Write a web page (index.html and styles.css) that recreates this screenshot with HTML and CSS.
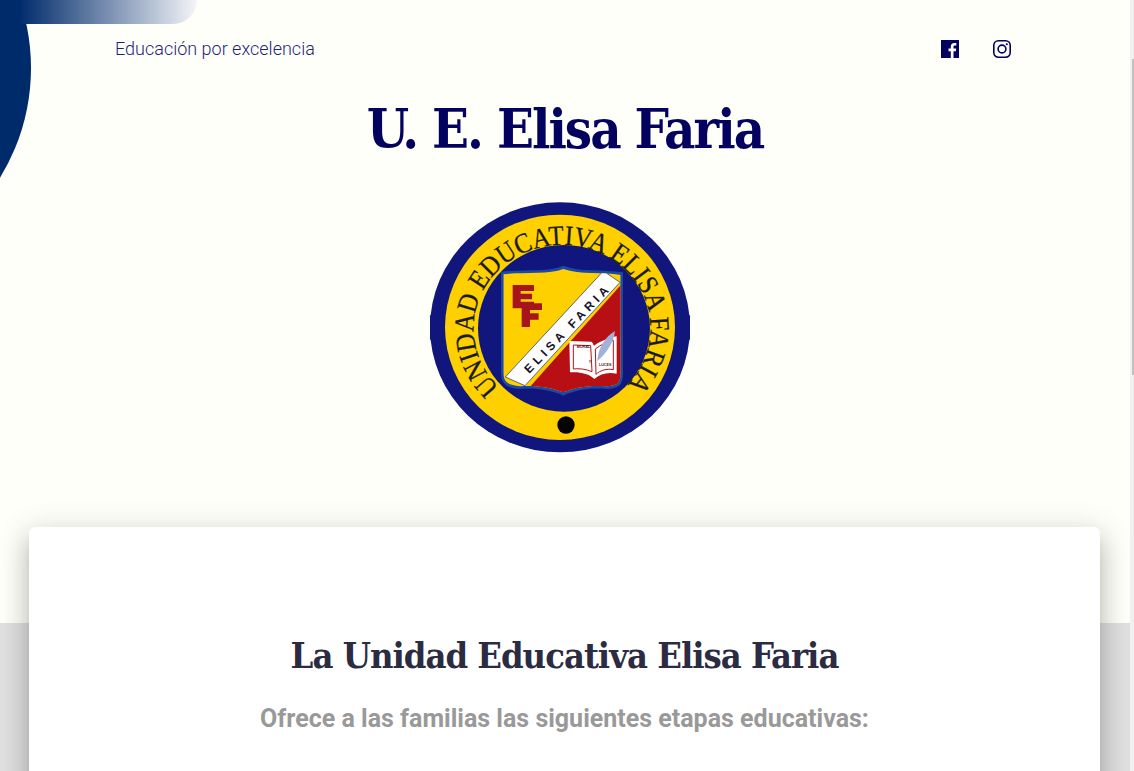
FILE: index.html
```html
<!DOCTYPE html>
<html lang="es">
<head>
<meta charset="utf-8">
<title>U. E. Elisa Faria</title>
<link rel="stylesheet" href="styles.css">
</head>
<body>
<div class="frame">
  <main class="page">
    <header class="hero">
      <div class="deco-circle"></div>
      <div class="deco-bar"></div>
      <div class="topbar">
        <span class="tagline">Educación por excelencia</span>
        <nav class="social">
          <a class="social-link" href="#" aria-label="Facebook">
            <svg class="icon" viewBox="0 0 18 18"><path class="icon-fill" d="M0 0H18V18H12.5V11.2H14.8L15.2 8.5H12.5V6.8C12.5 6 12.8 5.5 13.9 5.5H15.3V3.1C15 3.1 14.2 3 13.3 3C11.2 3 9.8 4.3 9.8 6.5V8.5H7.5V11.2H9.8V18H0Z"/></svg>
          </a>
          <a class="social-link" href="#" aria-label="Instagram">
            <svg class="icon" viewBox="0 0 18 18"><rect class="icon-line" x=".8" y=".8" width="16.4" height="16.4" rx="4.6"/><circle class="icon-line" cx="9" cy="9" r="3.9"/><circle class="icon-fill" cx="13.8" cy="4.2" r="1.05"/></svg>
          </a>
        </nav>
      </div>
      <h1 class="title">U. E. Elisa Faria</h1>
      <svg class="logo" viewBox="15 0 840 795" role="img" aria-label="Escudo Unidad Educativa Elisa Faria">
        <defs>
          <path id="ring-text" d="M239 577 A 265 250 0 1 1 615 575"/>
          <clipPath id="shield-clip"><path d="M250 238 C310 230 385 240 430 222 C480 240 550 230 602 240 L602 540 C600 566 590 572 560 574 C510 570 470 576 430 592 C390 576 340 570 300 574 C262 570 250 560 250 530Z"/></clipPath>
        </defs>
        <rect class="logo-navy" x="30" y="360" width="780" height="75" rx="4"/>
        <ellipse class="logo-navy" cx="420" cy="397" rx="390" ry="375"/>
        <ellipse class="logo-yellow" cx="420" cy="397" rx="345" ry="338"/>
        <ellipse class="logo-navy" cx="432" cy="400" rx="258" ry="250"/>
        <text class="ring-label"><textPath href="#ring-text" textLength="1195" lengthAdjust="spacingAndGlyphs">UNIDAD EDUCATIVA ELISA FARIA</textPath></text>
        <path class="shield-edge" d="M243 230 C310 222 385 232 430 212 C480 232 550 222 609 232 L609 540 C607 572 596 580 560 582 C510 578 470 584 430 602 C390 584 340 578 300 582 C256 578 243 566 243 530Z"/>
        <g clip-path="url(#shield-clip)">
          <rect class="logo-yellow" x="240" y="200" width="380" height="420"/>
          <path class="logo-red" d="M620 250 L620 620 L290 620Z"/>
          <path class="band" d="M550 228 L600 262 L315 572 L256 546Z"/>
        </g>
        <text class="band-label" transform="translate(328 537) rotate(-46)" textLength="345" lengthAdjust="spacing">ELISA FARIA</text>
        <path class="logo-mark" d="M278 270H342V288H302V296H336V313H302V320H342V340H278Z"/>
        <path class="logo-mark" d="M305 325H366V345H330V355H356V374H330V396H305Z"/>
        <path class="book" d="M448 438L514 440C518 442 520 448 522 452C540 440 565 428 590 424V536C565 530 540 536 523 552C508 536 480 530 450 532Z"/>
        <path class="book-line" d="M460 450L512 452L516 530C498 522 478 520 460 522ZM580 436V524C560 520 540 526 528 538L526 462C540 450 560 442 580 436Z"/>
        <path class="quill" d="M532 498C534 460 555 425 585 408C582 440 562 472 532 498Z"/>
        <text class="book-label" x="470" y="459">MORAL</text>
        <text class="book-label" x="506" y="503">Y</text>
        <text class="book-label" x="537" y="514">LUCES</text>
        <circle class="logo-dot" cx="438" cy="690" r="26"/>
      </svg>
    </header>
    <section class="band-section">
      <article class="card">
        <h2 class="card-title">La Unidad Educativa Elisa Faria</h2>
        <h3 class="card-subtitle">Ofrece a las familias las siguientes etapas educativas:</h3>
      </article>
    </section>
  </main>
  <aside class="scrollbar" aria-hidden="true"><div class="scrollbar-thumb"></div></aside>
</div>
</body>
</html>
```
FILE: styles.css
```css
* { box-sizing: border-box; }
html, body { margin: 0; height: 100%; overflow: hidden; }
body { font-family: Roboto, "Liberation Sans", sans-serif; background: #fffff9; }

.frame { display: flex; height: 771px; overflow: hidden; }
.page { flex: 1; min-width: 0; overflow: hidden; }
.scrollbar { width: 4px; background: #f1f1f1; padding-top: 59px; display: flex; justify-content: flex-end; }
.scrollbar-thumb { width: 2px; height: 316px; background: #c1c1c1; }

.hero { position: relative; height: 623px; background: #fffff9; overflow: hidden; }
.deco-circle { position: absolute; left: -389px; top: -142px; width: 420px; height: 420px; border-radius: 50%; background: #002b6b; }
.deco-bar { position: absolute; left: 0; top: 0; width: 197px; height: 24px; border-bottom-right-radius: 24px; background: linear-gradient(90deg, #002b6b 10%, #f4f5f8 100%); }

.topbar { position: relative; display: flex; justify-content: space-between; align-items: center; padding: 38px 119px 0 115px; height: 59px; }
.tagline { font-weight: 300; font-size: 18px; line-height: 21px; color: #1f1f78; }
.social { display: flex; gap: 34px; }
.social-link { display: block; width: 18px; height: 18px; }
.icon { display: block; width: 18px; height: 18px; }
.icon-fill { fill: #03035f; }
.icon-line { fill: none; stroke: #03035f; stroke-width: 1.6; }

.title { margin: 0; padding-top: 39px; height: 136px; text-align: center; font-family: "DejaVu Serif Condensed", "DejaVu Serif", serif; font-weight: 700; font-size: 54px; letter-spacing: -2px; line-height: 62px; color: #03035f; }

.logo { display: block; width: 280px; height: 265px; margin: 0 auto; }
.logo-navy { fill: #10167c; }
.logo-yellow { fill: #ffd000; }
.logo-red { fill: #b80f14; }
.logo-mark { fill: #a8141c; }
.logo-dot { fill: #050505; }
.shield-edge { fill: #1a4aa6; }
.band { fill: #fff; stroke: #10206e; stroke-width: 2; }
.ring-label { font-family: "Liberation Serif", serif; font-size: 84px; fill: #1a1a12; stroke: #1a1a12; stroke-width: .8; }
.band-label { font-family: "Liberation Sans", sans-serif; font-weight: 700; font-size: 36px; fill: #14142e; }
.book { fill: #fff; }
.book-line { fill: #fff; stroke: #b80f14; stroke-width: 3; }
.quill { fill: #9fb3d8; }
.book-label { font-family: "Liberation Sans", sans-serif; font-weight: 700; font-size: 11px; fill: #5a1016; }

.band-section { display: flow-root; height: 148px; background: #e0e0e0; padding: 0 30px 0 29px; }
.card { margin-top: -96px; position: relative; height: 400px; background: #fff; border-radius: 6px; padding-top: 105px; text-align: center; box-shadow: 0 16px 24px 2px rgba(0,0,0,.14), 0 6px 30px 5px rgba(0,0,0,.12), 0 8px 10px -5px rgba(0,0,0,.2); }
.card-title { margin: 0; font-family: "DejaVu Serif Condensed", "DejaVu Serif", serif; font-weight: 700; font-size: 36px; letter-spacing: -1px; line-height: 46px; color: #2b2c42; }
.card-subtitle { margin: 24px 0 0; font-weight: 700; font-size: 25px; line-height: 34px; color: #999; }
```
